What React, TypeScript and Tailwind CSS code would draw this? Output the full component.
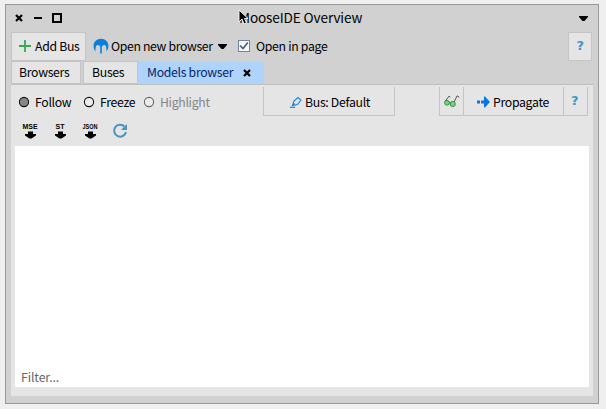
import React from 'react';

function Button({ className, children }: { className: string; children?: React.ReactNode }) {
  return (
    <div className={`flex shrink-0 items-center overflow-hidden border-[#c4c4c4] bg-[#e5e5e5] ${className}`}>
      {children}
    </div>
  );
}

function Radio({ on, dim }: { on?: boolean; dim?: boolean }) {
  return (
    <svg width="12" height="12" viewBox="0 0 12 12" className="shrink-0">
      <circle cx="6" cy="6" r="4.6" fill={on ? '#858585' : '#ececec'} stroke={dim ? '#686868' : '#111'} strokeWidth="1.1" />
    </svg>
  );
}

function Export({ label }: { label: string }) {
  return (
    <svg width="20" height="18" viewBox="0 0 20 18" className="shrink-0 overflow-visible">
      <text x="10" y="6" textAnchor="middle" fontFamily="Liberation Sans" fontWeight="bold" fontSize="6.5" letterSpacing="0" textLength={label === 'ST' ? 9 : 15} lengthAdjust="spacingAndGlyphs">
        {label}
      </text>
      <path d="M8 8.5h5V11h3v1.5L11.5 15.5h-2L5 12.5V11h3z" fill="#000" />
    </svg>
  );
}

function Cross() {
  return (
    <svg width="8" height="8" viewBox="0 0 8 8" className="shrink-0">
      <path d="M1 1l6 6M7 1L1 7" stroke="#000" strokeWidth="2.2" />
    </svg>
  );
}

function Caret() {
  return (
    <svg width="9" height="5" viewBox="0 0 9 5" className="shrink-0">
      <path d="M0 0h9v1L5.5 5h-2L0 1z" fill="#000" />
    </svg>
  );
}

function Help() {
  return <span className="font-['DejaVu_Sans'] text-[13px] font-bold leading-4 text-[#4794c2]">?</span>;
}

export default function App() {
  return (
    <div className="h-[409px] w-[606px] overflow-hidden bg-[#efefef] pl-[5px] pt-1 font-['Noto_Sans_CJK_SC',sans-serif] text-[12.25px] leading-5 tracking-[-0.3px] text-black">
      <div className="relative flex h-[400px] w-[594px] flex-col border border-[#999] bg-[#d1d1d1] pl-[5px]">
        <div className="flex h-[27px] shrink-0 items-center">
          <div className="mb-px ml-1 flex items-center"><Cross /></div>
          <div className="mb-[2px] ml-[11px] h-[2px] w-2 bg-black" />
          <div className="mb-px ml-[10px] h-[10px] w-[10px] border-2 border-black" />
          <div className="ml-[177px] w-[124px] whitespace-nowrap pb-[3px] text-[13.6px] tracking-[-0.13px]">MooseIDE Overview</div>
          <div className="ml-[216px] flex pb-px"><Caret /></div>
        </div>

        <div className="flex h-[29px] shrink-0 items-center">
          <Button className="h-[29px] w-[75px] border">
            <svg width="12" height="12" viewBox="0 0 12 12" className="mb-px ml-[7px] shrink-0">
              <path d="M6 0v12M0 6h12" stroke="#36a852" strokeWidth="1.8" />
            </svg>
            <span className="ml-[4px] whitespace-nowrap pb-[2px]">Add Bus</span>
          </Button>
          <svg width="16" height="16" viewBox="0 0 16 16" className="ml-[7px] mb-px shrink-0">
            <path d="M2.5 13.5C-2 7 2 .8 8 .8s10 6.2 5.5 12.7C13.7 9 12.8 7 11.3 7 10 7 9 8 8.8 9v6.5H7.2V9C7 8 6 7 4.7 7 3.2 7 2.3 9 2.5 13.5z" fill="#0b80d8" />
          </svg>
          <span className="ml-[2px] w-[102px] whitespace-nowrap pb-[2px] tracking-[-0.35px]">Open new browser</span>
          <span className="ml-[5px] flex"><Caret /></span>
          <div className="mb-[2px] ml-[11px] flex h-3 w-3 shrink-0 items-center justify-center border border-[#71839e] bg-[#f3f8fb]">
            <svg width="10" height="10" viewBox="0 0 10 10"><path d="M1 4.5l3 3L8.8 1.5" fill="none" stroke="#465b86" strokeWidth="1.6" /></svg>
          </div>
          <span className="ml-[6px] w-[76px] whitespace-nowrap pb-[2px]">Open in page</span>
          <Button className="ml-auto mr-[6px] h-[29px] w-6 justify-center border pb-px"><Help /></Button>
        </div>

        <div className="flex h-[24px] w-[582px] shrink-0 border-b border-[#c0c0c0]">
          <Button className="h-[23px] w-[70px] border pb-px pl-[7px]">Browsers</Button>
          <Button className="ml-[2px] h-[23px] w-[55px] border pb-px pl-2">Buses</Button>
          <div className="flex h-[23px] w-[126px] items-center bg-[#afd4fb] pl-[9px] text-[#03246b]">
            <span className="w-[87px] whitespace-nowrap pb-px">Models browser</span>
            <span className="ml-[9px]"><Cross /></span>
          </div>
        </div>

        <div className="flex h-[311px] w-[582px] shrink-0 flex-col bg-[#e5e5e5]">
          <div className="mt-px flex h-[31px] shrink-0 items-center pl-[7px]">
            <Radio on />
            <span className="ml-[5px] w-[48px]">Follow</span>
            <Radio />
            <span className="ml-[5px] w-[43px]">Freeze</span>
            <Radio dim />
            <span className="ml-[5px] w-[56px] text-[#858585]">Highlight</span>
            <Button className="ml-[47px] h-[29px] w-[132px] border-x border-b pl-[26px] pt-px">
              <svg width="12" height="12" viewBox="0 0 12 12" className="shrink-0">
                <path d="M2.5 9.5L4 5l4-3.5L11 4 7.5 8.5zM2.5 9.5l2-2" fill="none" stroke="#1784dc" strokeWidth="1.1" />
                <path d="M0 11.3h5" stroke="#1784dc" strokeWidth="1.2" />
              </svg>
              <span className="ml-[3px] whitespace-nowrap">Bus: Default</span>
            </Button>
            <Button className="ml-[44px] h-[29px] w-[25px] border-x border-b pl-1 pt-px">
              <svg width="16" height="13" viewBox="0 0 16 13" className="shrink-0">
                <path d="M1 6.5L5.2 1l1 1.3M10 7l3-6h1l1 1.5M5 7.2l2 .8" fill="none" stroke="#555" />
                <circle cx="3" cy="7.8" r="2.4" fill="#75d47f" stroke="#3c8f48" />
                <circle cx="8.7" cy="9" r="2.6" fill="#75d47f" stroke="#3c8f48" />
              </svg>
            </Button>
            <Button className="-ml-px h-[29px] w-[101px] border-x border-b pl-[13px] pt-px">
              <svg width="14" height="12" viewBox="0 0 14 12" className="shrink-0">
                <path d="M0 4.5h3v3H0zM4 4.5h3V.5h1L13 6 8 11.5H7V7.5H4z" fill="#0879db" />
              </svg>
              <span className="ml-[2px]">Propagate</span>
            </Button>
            <Button className="-ml-px h-[29px] w-[25px] border-x border-b pl-[7px]"><Help /></Button>
          </div>
          <div className="flex h-[29px] shrink-0 items-start pl-[9px] pt-[6px]">
            <Export label="MSE" />
            <span className="ml-[10px]"><Export label="ST" /></span>
            <span className="ml-[10px]"><Export label="JSON" /></span>
            <svg width="16" height="16" viewBox="0 0 16 16" className="ml-[12px]">
              <path d="M12.5 3.5A6 6 0 1 0 14 9" fill="none" stroke="#4794c2" strokeWidth="2" />
              <path d="M15 1v6H9z" fill="#4794c2" />
            </svg>
          </div>
          <div className="ml-1 flex h-[241px] w-[574px] items-end bg-white pl-[6px] tracking-[-0.1px] text-[#666]">Filter...</div>
        </div>

        <svg width="11" height="16" viewBox="0 0 11 16" className="absolute left-[232px] top-1">
          <path d="M1 1v12l3-3 2 5 2.5-1-2-4.5H10z" fill="#000" stroke="#fff" strokeWidth=".9" />
        </svg>
      </div>
    </div>
  );
}
